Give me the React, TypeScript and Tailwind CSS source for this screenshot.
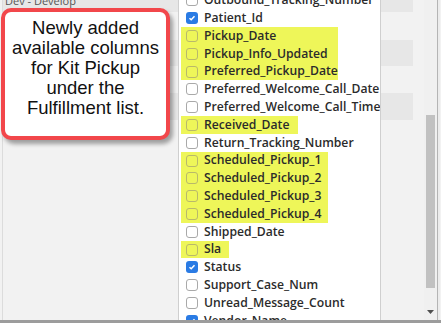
import React from 'react';

type Item = { name: string; checked?: boolean };
type Group = { hl?: number; items: Item[] };

const groups: Group[] = [
  { items: [{ name: 'Outbound_Tracking_Number' }, { name: 'Patient_Id', checked: true }] },
  { hl: 157, items: [{ name: 'Pickup_Date' }, { name: 'Pickup_Info_Updated' }, { name: 'Preferred_Pickup_Date' }] },
  { items: [{ name: 'Preferred_Welcome_Call_Date' }, { name: 'Preferred_Welcome_Call_Time' }] },
  { hl: 117, items: [{ name: 'Received_Date' }] },
  { items: [{ name: 'Return_Tracking_Number' }] },
  {
    hl: 147,
    items: [
      { name: 'Scheduled_Pickup_1' },
      { name: 'Scheduled_Pickup_2' },
      { name: 'Scheduled_Pickup_3' },
      { name: 'Scheduled_Pickup_4' },
    ],
  },
  { items: [{ name: 'Shipped_Date' }] },
  { hl: 48, items: [{ name: 'Sla' }] },
  {
    items: [
      { name: 'Status', checked: true },
      { name: 'Support_Case_Num' },
      { name: 'Unread_Message_Count' },
      { name: 'Vendor_Name', checked: true },
    ],
  },
];

const Box: React.FC<{ checked?: boolean; hl?: boolean }> = ({ checked, hl }) =>
  checked ? (
    <span className="w-[12px] h-[12px] shrink-0 rounded-[3px] bg-[#2a7be4] flex items-center justify-center">
      <svg width="8" height="8" viewBox="0 0 8 8">
        <path d="M1.5 4.2 L3.2 5.8 L6.5 2.2" fill="none" stroke="white" strokeWidth="1.5" />
      </svg>
    </span>
  ) : (
    <span
      className={
        hl
          ? 'w-[12px] h-[12px] shrink-0 rounded-[3px] border border-[#b9b96a]'
          : 'w-[12px] h-[12px] shrink-0 rounded-[3px] border border-[#a9a9a9] bg-white'
      }
    />
  );

// background list rows peeking out behind the menu
const stripes = [12, 28, 26, 27, 27];

export default function App() {
  return (
    <div className="w-[441px] h-[323px] relative overflow-hidden bg-[#f2f2f2] flex flex-col" style={{ fontFamily: '"Open Sans", sans-serif' }}>
      {/* page behind the menu */}
      <div className="flex-1 flex">
        <div className="w-[2px]" />
        <div className="w-[411px] border-l border-[#dcdcdc] flex flex-col relative">
          <div className="absolute left-[2px] top-[-5px] text-[11px] text-[#555] leading-none whitespace-nowrap">Dev - Develop</div>
          {stripes.map((h, i) => (
            <div key={i} style={{ height: h }} className={i % 2 === 0 ? 'bg-[#e7e7e7]' : ''} />
          ))}
        </div>
        <div className="w-[11px]" />
        <div className="w-[13px] flex flex-col items-center bg-[#f0f0f0]">
          <div className="h-[115px]" />
          <div className="w-[9px] h-[173px] bg-[#c1c1c1]" />
          <div className="flex-1 flex items-end pb-[6px]">
            <svg width="7" height="4" viewBox="0 0 7 4">
              <path d="M0 0 H7 L3.5 4 Z" fill="#505050" />
            </svg>
          </div>
        </div>
        <div className="w-[1px] bg-[#b4b4b4]" />
        <div className="w-[2px] bg-[#ececec]" />
      </div>
      <div className="h-[3px] bg-[#9c9c9c]" />

      {/* columns dropdown */}
      <div className="absolute left-[178px] top-0 w-[203px] h-[320px] bg-white border-l border-r border-[#cfcfcf] overflow-hidden">
        <div className="-mt-[8.5px] pl-[2px]">
          {groups.map((g, gi) => (
            <div key={gi} className={g.hl ? 'bg-[#eef659]' : ''} style={g.hl ? { width: g.hl } : undefined}>
              {g.items.map((it) => (
                <div key={it.name} className="h-[17.8px] flex items-center gap-[6px] pl-[5px] whitespace-nowrap">
                  <Box checked={it.checked} hl={!!g.hl} />
                  <span className="text-[12.2px] font-semibold text-[#2b2b2b] leading-none">{it.name}</span>
                </div>
              ))}
            </div>
          ))}
        </div>
      </div>

      {/* annotation callout */}
      <div className="absolute left-[1px] top-[8px] w-[169px] h-[132px] bg-white border-[4px] border-[#f2474b] rounded-[10px] shadow-[3px_4px_4px_rgba(0,0,0,0.35)] pt-[6px] text-center text-[18.5px] leading-[20px] text-[#111]" style={{ fontFamily: '"Liberation Sans", Arial, sans-serif' }}>
        Newly added
        <br />
        available columns
        <br />
        for Kit Pickup
        <br />
        under the
        <br />
        Fulfillment list.
      </div>
    </div>
  );
}
